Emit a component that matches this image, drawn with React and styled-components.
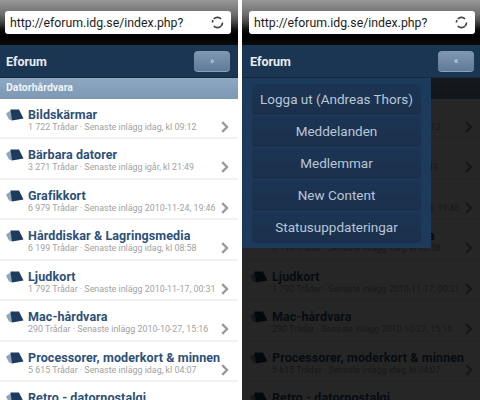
import React from 'react';
import styled, { createGlobalStyle } from 'styled-components';

const Global = createGlobalStyle`
  html, body { margin: 0; padding: 0; background: #fff; }
  body { width: 480px; height: 400px; overflow: hidden; font-family: Roboto, "Open Sans", sans-serif; }
`;

const Page = styled.div`
  display: flex;
  gap: 4px;
  width: 480px;
  height: 400px;
  overflow: hidden;
`;

// the left shot is cropped 2px short on its left side
const Phone = styled.div`
  position: relative;
  flex: none;
  width: 240px;
  height: 400px;
  margin-left: ${(p) => (p.$cropped ? '-2px' : '0')};
  overflow: hidden;
  background: #fff;
  display: flex;
  flex-direction: column;
`;

const UrlBar = styled.div`
  height: 45px;
  flex: none;
  box-sizing: border-box;
  padding: 11px 7px 0 7px;
  background: linear-gradient(#989898 0, #6e6e6e 14px, #4c4c4c 21px, #0c0c0c 30px, #000 36px, #0a0a0a 45px);
`;

const UrlField = styled.div`
  height: 23px;
  box-sizing: border-box;
  background: #fff;
  border-radius: 3px;
  display: flex;
  align-items: center;
  justify-content: space-between;
  padding: 0 7px 0 5px;
  font-size: 12.3px;
  color: #1c1c1c;
`;

const Header = styled.div`
  height: 33px;
  flex: none;
  box-sizing: border-box;
  background: #1b3653;
  border-bottom: 1px solid #14283f;
  display: flex;
  align-items: center;
  justify-content: space-between;
  padding: 0 8px 0 8px;
  color: #e8edf2;
  font-size: 12.5px;
  font-weight: 700;
`;

const MenuButton = styled.div`
  width: 36px;
  height: 21px;
  border-radius: 4px;
  background: linear-gradient(#8198b2, #5f7a98);
  border-bottom: 1px solid #8ba0b6;
  box-sizing: border-box;
  color: #d6e0ea;
  font-size: 9px;
  font-weight: 400;
  display: flex;
  align-items: center;
  justify-content: center;
`;

const Section = styled.div`
  height: 20.5px;
  flex: none;
  box-sizing: border-box;
  padding-left: 8px;
  background: linear-gradient(#8ea8c2, #7d98b4);
  color: #eef2f6;
  font-size: 10.5px;
  font-weight: 700;
  line-height: 20px;
`;

const Row = styled.div`
  height: 40.5px;
  flex: none;
  box-sizing: border-box;
  border-bottom: 2px solid #f1f1f1;
  display: flex;
  align-items: flex-start;
  padding: 8px 9px 0 8px;
`;

const RowText = styled.div`
  flex: 1;
  min-width: 0;
  margin-left: 4px;
  white-space: nowrap;
`;

const Title = styled.div`
  color: #2c5077;
  font-size: 12.5px;
  font-weight: 700;
  line-height: 15px;
  letter-spacing: 0.1px;
`;

const Meta = styled.div`
  color: #a2a2a2;
  font-size: 8.9px;
  line-height: 11px;
`;

const Overlay = styled.div`
  position: absolute;
  left: 0;
  right: 0;
  top: 78px;
  bottom: 0;
  background: rgba(0, 0, 0, 0.85);
`;

const Menu = styled.div`
  position: absolute;
  left: 0;
  top: 78px;
  width: 189px;
  box-sizing: border-box;
  padding: 6px 10px 5px 10px;
  background: #1c3a5c;
  display: flex;
  flex-direction: column;
  gap: 1.5px;
`;

const MenuItem = styled.div`
  height: 30.5px;
  border-radius: 3px;
  background: linear-gradient(#1c3554, #1a2f4b);
  color: #b8c6d6;
  font-size: 13.5px;
  display: flex;
  align-items: center;
  justify-content: center;
  white-space: nowrap;
`;

const Reload = () => (
  <svg width="13" height="13" viewBox="0 0 14 14" fill="none" stroke="#444" strokeWidth="1.8">
    <path d="M3 3.2A5.4 5.4 0 0 1 10.8 3M12.4 7a5.4 5.4 0 0 1-1.4 3.6M10.8 11A5.4 5.4 0 0 1 3 10.8M1.6 7a5.4 5.4 0 0 1 .6-2.6" />
  </svg>
);

const ForumIcon = () => (
  <svg width="18" height="13" viewBox="0 0 18 13" style={{ flex: 'none', marginTop: 2 }}>
    <path d="M0 4.5L6 0.5V11.5L3 10.5Z" fill="#8fa6bd" />
    <path d="M4.5 0.5H13L17.5 9.5L6 11.5Z" fill="#1e3a5c" />
  </svg>
);

const ChevronWrap = styled.div`
  flex: none;
  margin-top: 11px;
`;

const Chevron = () => (
  <ChevronWrap>
    <svg width="8" height="12" viewBox="0 0 8 12" fill="none" stroke="#9a9a9a" strokeWidth="2.4">
      <path d="M1.2 1.2L6 6L1.2 10.8" />
    </svg>
  </ChevronWrap>
);

const forums = [
  { name: 'Bildskärmar', meta: '1 722 Trådar · Senaste inlägg idag, kl 09:12' },
  { name: 'Bärbara datorer', meta: '3 271 Trådar · Senaste inlägg igår, kl 21:49' },
  { name: 'Grafikkort', meta: '6 979 Trådar · Senaste inlägg 2010-11-24, 19:46' },
  { name: 'Hårddiskar & Lagringsmedia', meta: '6 199 Trådar · Senaste inlägg idag, kl 08:58' },
  { name: 'Ljudkort', meta: '1 792 Trådar · Senaste inlägg 2010-11-17, 00:31' },
  { name: 'Mac-hårdvara', meta: '290 Trådar · Senaste inlägg 2010-10-27, 15:16' },
  { name: 'Processorer, moderkort & minnen', meta: '5 615 Trådar · Senaste inlägg idag, kl 04:07' },
  { name: 'Retro - datornostalgi', meta: '' },
];

const menuItems = ['Logga ut (Andreas Thors)', 'Meddelanden', 'Medlemmar', 'New Content', 'Statusuppdateringar'];

const Screen = ({ open }) => (
  <Phone $cropped={!open}>
    <UrlBar>
      <UrlField>
        http://eforum.idg.se/index.php?
        <Reload />
      </UrlField>
    </UrlBar>
    <Header>
      Eforum
      <MenuButton>{open ? '«' : '»'}</MenuButton>
    </Header>
    <Section>Datorhårdvara</Section>
    {forums.map((f) => (
      <Row key={f.name}>
        <ForumIcon />
        <RowText>
          <Title>{f.name}</Title>
          <Meta>{f.meta}</Meta>
        </RowText>
        <Chevron />
      </Row>
    ))}
    {open && <Overlay />}
    {open && (
      <Menu>
        {menuItems.map((m) => (
          <MenuItem key={m}>{m}</MenuItem>
        ))}
      </Menu>
    )}
  </Phone>
);

export default function App() {
  return (
    <Page>
      <Global />
      <Screen />
      <Screen open />
    </Page>
  );
}
